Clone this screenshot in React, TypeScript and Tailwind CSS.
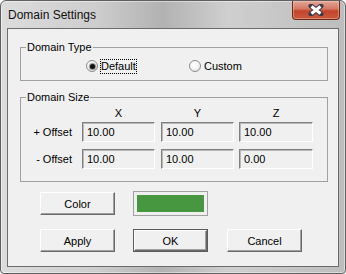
import React from "react";

function Radio({ checked }: { checked?: boolean }) {
  return (
    <span className="flex h-[12px] w-[12px] items-center justify-center rounded-full border border-[#8c8c8c] bg-[radial-gradient(circle_at_40%_35%,#ffffff_0%,#f4f4f4_50%,#d6d6d6_100%)]">
      {checked && <span className="h-[5px] w-[5px] rounded-full bg-[#111] shadow-[0_0_1px_1px_#8a8a8a]" />}
    </span>
  );
}

function Field({ value, className = "" }: { value: string; className?: string }) {
  return (
    <div
      className={`flex h-[20px] items-center border border-t-[#7f7f7f] border-l-[#7f7f7f] border-r-white border-b-white bg-[#f0f0f0] pl-[4px] text-black shadow-[inset_1px_1px_0_#b9b9b9] ${className}`}
    >
      {value}
    </div>
  );
}

function Button({ label, isDefault }: { label: string; isDefault?: boolean }) {
  return (
    <div className={`h-[23px] w-[75px] ${isDefault ? "border border-[#5a5a5a]" : ""}`}>
      <div className="flex h-full w-full items-center justify-center border border-t-white border-l-white border-r-[#6a6a6a] border-b-[#6a6a6a] bg-[#f0f0f0] text-black shadow-[inset_-1px_-1px_0_#a0a0a0]">
        {label}
      </div>
    </div>
  );
}

export default function App() {
  return (
    <div className="h-[274px] w-[346px] bg-white font-['Liberation_Sans',Arial,sans-serif] text-[11px] leading-[14px]">
      <div className="flex h-full w-full flex-col rounded-t-[6px] rounded-b-[4px] border border-[#5f5f5f] bg-[linear-gradient(to_right,#dcdcdc_0%,#cdcdcd_28%,#b2b2b2_47%,#cfcfcf_66%,#bdbdbd_100%)] px-[6px] pb-[6px] shadow-[inset_0_0_0_1px_rgba(255,255,255,0.45)]">
        {/* title bar */}
        <div className="-mx-[6px] flex h-[27px] items-start justify-between pr-[5px]">
          <span className="pl-[7px] pt-[7px] text-[12px] leading-[15px] text-[#111]">Domain Settings</span>
          <div className="flex h-[19px] w-[48px] items-center justify-center rounded-b-[4px] border border-t-0 border-[#6a2a1e] bg-[linear-gradient(to_bottom,#e4a697_0%,#d67a66_42%,#c4442b_56%,#cb5a3e_100%)] shadow-[inset_0_0_0_1px_rgba(255,220,210,0.35)]">
            <svg width="16" height="12" viewBox="0 0 16 12">
              <path d="M3 2 L13 10 M13 2 L3 10" stroke="#3b3b4a" strokeWidth="5" strokeLinecap="round" />
              <path d="M3.5 2.5 L12.5 9.5 M12.5 2.5 L3.5 9.5" stroke="#ffffff" strokeWidth="3" strokeLinecap="butt" />
            </svg>
          </div>
        </div>

        {/* client area */}
        <div className="flex flex-1 flex-col border border-[#6c6c6c] bg-[#f0f0f0] text-black">
          {/* Domain Type */}
          <fieldset className="ml-[12px] mt-[11px] w-[308px] border border-[#a0a0a0] pb-[7px]">
            <legend className="ml-[5px] px-[1px] leading-[14px]">Domain Type</legend>
            <div className="mt-[5px] flex h-[14px] items-center pl-[65px]">
              <div className="flex w-[103px] items-center">
                <Radio checked />
                <span className="ml-[2px] border border-dotted border-black px-[0px] leading-[13px]">Default</span>
              </div>
              <div className="flex items-center">
                <Radio />
                <span className="ml-[3px] leading-[13px]">Custom</span>
              </div>
            </div>
          </fieldset>

          {/* Domain Size */}
          <fieldset className="ml-[12px] mt-[9px] w-[308px] border border-[#a0a0a0] pb-[12px]">
            <legend className="ml-[5px] px-[1px] leading-[14px]">Domain Size</legend>
            <div className="mt-[2px] flex h-[14px] pl-[61px]">
              <span className="w-[73px] text-center">X</span>
              <span className="ml-[6px] w-[73px] text-center">Y</span>
              <span className="ml-[5px] w-[74px] text-center">Z</span>
            </div>
            <div className="mt-[2px] flex items-center">
              <span className="w-[61px] pr-[10px] text-right">+ Offset</span>
              <Field value="10.00" className="w-[73px]" />
              <Field value="10.00" className="ml-[6px] w-[73px]" />
              <Field value="10.00" className="ml-[5px] w-[74px]" />
            </div>
            <div className="mt-[7px] flex items-center">
              <span className="w-[61px] pr-[10px] text-right">- Offset</span>
              <Field value="10.00" className="w-[73px]" />
              <Field value="10.00" className="ml-[6px] w-[73px]" />
              <Field value="0.00" className="ml-[5px] w-[74px]" />
            </div>
          </fieldset>

          {/* Color */}
          <div className="ml-[32px] mt-[9px] flex h-[25px] items-center gap-[18px]">
            <Button label="Color" />
            <div className="h-[25px] w-[75px] border border-[#a0a0a0] p-[3px]">
              <div className="h-full w-full bg-[#46973f]" />
            </div>
          </div>

          {/* actions */}
          <div className="ml-[32px] mt-[13px] flex items-center">
            <Button label="Apply" />
            <div className="ml-[18px]">
              <Button label="OK" isDefault />
            </div>
            <div className="ml-[19px]">
              <Button label="Cancel" />
            </div>
          </div>
        </div>
      </div>
    </div>
  );
}
